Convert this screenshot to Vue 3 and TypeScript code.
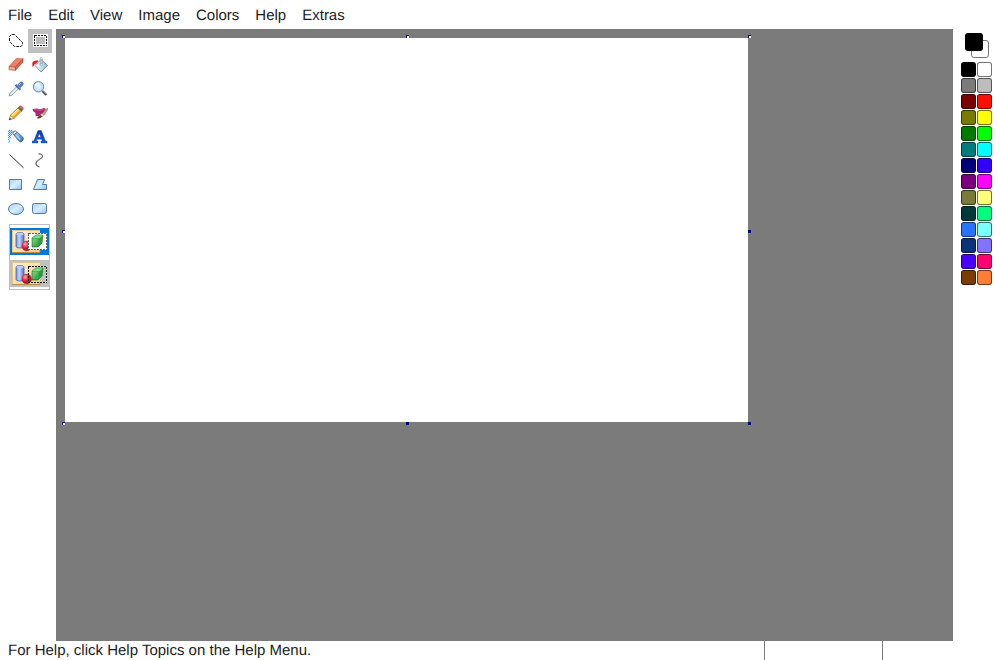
<script setup lang="ts">
import { ref } from 'vue'

const menus: string[] = ['File', 'Edit', 'View', 'Image', 'Colors', 'Help', 'Extras']
const tools: string[] = [
  'lasso', 'select', 'eraser', 'fill', 'picker', 'magnifier', 'pencil', 'brush',
  'airbrush', 'text', 'line', 'curve', 'rectangle', 'polygon', 'ellipse', 'rounded',
]
const colors: string[] = [
  '#000000', '#ffffff', '#7b7b7b', '#bdbdbd', '#7b0000', '#ff0f00', '#7b7b00', '#ffff00',
  '#007b00', '#00ff00', '#007b7b', '#00ffff', '#00007b', '#3300ff', '#7b007b', '#ff00ff',
  '#7b7b39', '#ffff7b', '#003939', '#00ff7b', '#2873ff', '#7bffff', '#0a3379', '#8473ff',
  '#4a00ff', '#ff0073', '#7b3c00', '#ff7d34',
]
const handles: string[] = ['nw open', 'n open', 'ne open', 'w open', 'e', 'sw open', 's', 'se']
const activeTool = ref('select')
const transparent = ref(false)
</script>

<template>
  <div class="paint">
    <nav class="menu">
      <button v-for="m in menus" :key="m">{{ m }}</button>
    </nav>
    <main class="middle">
      <aside class="toolbox">
        <div class="tools">
          <button v-for="t in tools" :key="t" class="tool" :class="{ active: activeTool === t }" @click="activeTool = t">
            <svg width="16" height="16" viewBox="0 0 16 16" fill="none">
              <g v-if="t === 'lasso'" stroke="#111">
                <path d="M1.5 8V3.5L3.5 1.5H6.5L14.5 9.5V12L13 13.5H6.5L1.5 8.5" stroke-dasharray="3 1" />
              </g>
              <g v-else-if="t === 'select'">
                <path d="M1 1h15v13H1z" fill="#fff" />
                <path d="M4 4h9v7H4z" fill="#bdbdbd" />
                <path d="M2.5 2.5h12v10h-12z" stroke="#111" stroke-dasharray="2 1" shape-rendering="crispEdges" />
              </g>
              <g v-else-if="t === 'eraser'" stroke-linejoin="round">
                <path d="M8.5 1.3L15 1.7L7.5 10L1 9.5Z" fill="#ef8067" stroke="#cb6550" stroke-width=".6" />
                <path d="M1 9.5L7.5 10V13.3L1.2 12.7Z" fill="#f7ad94" stroke="#9d4a3d" stroke-width=".7" />
                <path d="M7.5 10L15 1.7V5L7.5 13.3Z" fill="#d9654e" stroke="#a8483a" stroke-width=".7" />
              </g>
              <g v-else-if="t === 'fill'">
                <path d="M9 2.5L15.5 8.5L9 15L3 8.5Z" fill="url(#metal)" stroke="#5b7f9c" stroke-width=".8" />
                <path d="M8.3 7.5V1.5C8.3 0 10.3 0 10.3 1.5V7" stroke="#9da5aa" stroke-width=".8" />
                <circle cx="9.3" cy="7.5" r="1" fill="#fff" stroke="#777" stroke-width=".5" />
                <path d="M6.5 3.8C3.5 2.8 1 4 .3 6L.5 10.5L2.5 7.5L5 5.8Z" fill="#d72523" />
              </g>
              <g v-else-if="t === 'picker'">
                <path d="M8.8 5.7L2 12L1.2 15L4 14L10.8 7.5" fill="#e0f0f6" stroke="#7296a7" stroke-width=".8" />
                <path d="M8 3.5L12.7 8L11.5 8.8L7.3 4.8Z" fill="#426ec0" stroke="#335a9f" stroke-width=".8" />
                <path d="M9.7 4L12 1.5C13 .5 14.7 1 15 2C15.4 3 15 4 14.3 4.7L12.2 6.5Z" fill="#5782ce" stroke="#4068ac" stroke-width=".8" />
                <path d="M11 4L13 2" stroke="#a9c9f1" />
              </g>
              <g v-else-if="t === 'magnifier'">
                <path d="M10.5 10L14.3 14" stroke="#555" stroke-width="2.4" />
                <path d="M11 9.7L14.3 13" stroke="#b9a89b" stroke-width=".8" />
                <circle cx="6.5" cy="5.8" r="5.2" fill="url(#glass)" stroke="#6b8fbd" stroke-width="1" />
                <path d="M3.4 5C4 3 5.5 2.2 7.5 2.5" stroke="#fff" stroke-width="1.3" />
              </g>
              <g v-else-if="t === 'pencil'">
                <path d="M1 15L2.5 10L6.2 13.5Z" fill="#f3ddb0" stroke="#9b733b" stroke-width=".6" />
                <path d="M2.5 10L10 3L13.5 6L6 13.5Z" fill="#ffd44d" stroke="#93702e" stroke-width=".8" />
                <path d="M5.2 12.8L12.5 5.5" stroke="#e9942d" stroke-width="1.2" />
                <path d="M3.5 10.4L10.2 4" stroke="#fff5a0" />
                <path d="M9.7 3L11.2 1.5L15 5L13.5 6.5Z" fill="#55715c" />
                <path d="M11.2 1.5Q12 .5 13 .8L15.2 2.5Q15.5 4 14.8 5Z" fill="#e96875" stroke="#a5424b" stroke-width=".5" />
                <path d="M1 15L1.8 12.7L3.3 14.2Z" fill="#222" />
              </g>
              <g v-else-if="t === 'brush'">
                <path d="M.3 4L5 3.5L8 4.2L12 3L14 4L11 8L7 11H3.5V8L1.5 6.5Z" fill="#aa2871" />
                <path d="M2 4.7H5.5L8 5.5L11.5 4.3" stroke="#cf5794" />
                <path d="M10 8.7L15.2 3.2L16 4L12 10.2Z" fill="#cfa26b" stroke="#765437" stroke-width=".5" />
                <path d="M8.5 9.8L10 8.5L12 10.2L10.3 12Z" fill="#f4eedf" stroke="#777" stroke-width=".5" />
                <path d="M4.5 13.2L8.3 9.7L10.2 11.7Q8 14.2 4.5 13.2Z" fill="#603b21" />
              </g>
              <g v-else-if="t === 'airbrush'">
                <path d="M0 1H5V4L3 8L2 14H0Z" fill="#d4f2fd" />
                <path d="M0 2h1v1H0zM2 2h1v1H2zM4 2h1v1H4zM0 4h1v1H0zM2 4h1v1H2zM0 6h1v1H0zM2 6h1v1H2zM0 8h1v1H0zM2 8h1v1H2zM0 10h1v1H0zM1 12h1v1H1z" fill="#29b6f6" />
                <path d="M1 3h1v1H1zM3 3h1v1H3zM1 5h1v1H1zM3 5h1v1H3zM1 7h1v1H1zM1 1h1v1H1zM3 1h1v1H3z" fill="#3978dc" />
                <path d="M1 9h1v1H1zM1 11h1v1H1zM0 13h1v1H0z" fill="#75ddf9" />
                <path d="M5 3L7.5 1.7L9.3 3.5L6.5 6.3L4.8 4.7Z" fill="#ddd" stroke="#505050" stroke-width=".7" />
                <path d="M6 6L9.3 3.2L15.3 8.7Q16 11.5 12.5 13Q11 12.5 6 6Z" fill="url(#spray)" stroke="#345d86" stroke-width=".8" />
                <path d="M8 6L12.2 10.5" stroke="#a8d5fa" stroke-width="1.2" />
              </g>
              <g v-else-if="t === 'text'">
                <path d="M6 1.5H9.3L13.5 12H15V14H9V12H10.3L9.6 10.2H5L4.3 12H6V14H0V12H1.8ZM5.8 8.3H8.8L7.3 4.5Z" fill="url(#textBlue)" fill-rule="evenodd" stroke="#173c92" stroke-width=".4" />
              </g>
              <path v-else-if="t === 'line'" d="M1.5 1.5L15.5 14.8" stroke="#303030" />
              <path v-else-if="t === 'curve'" d="M6.5 .9Q10.5 .5 10.5 3.5C10.5 6 4 6.5 4 10.5Q4 13 7.5 14" stroke="#606060" stroke-width="1.1" />
              <path v-else-if="t === 'rectangle'" d="M1.5 2.5h12v10h-12z" fill="url(#blueFill)" stroke="#527aa4" />
              <path v-else-if="t === 'polygon'" d="M5.5 2.5H12.5L10.5 7.5H14.5V12.5H1.5Z" fill="url(#blueFill)" stroke="#527aa4" />
              <ellipse v-else-if="t === 'ellipse'" cx="8" cy="8" rx="7.5" ry="5.5" fill="url(#blueFill)" stroke="#527aa4" />
              <rect v-else x=".5" y="2.5" width="14" height="10" rx="2" fill="url(#blueFill)" stroke="#527aa4" />
            </svg>
          </button>
        </div>
        <div class="options">
          <button v-for="n in 2" :key="n" class="mode" :class="{ chosen: transparent === (n === 2) }" @click="transparent = n === 2">
            <svg width="39" height="27" viewBox="0 0 39 27" fill="none">
              <path d="M2 2h28v23H2z" fill="url(#paper)" />
              <path d="M2.5 24V2.5H30" stroke="#e2c58d" />
              <path d="M2 24.5H30V22" stroke="#b88d4a" />
              <g :transform="n === 2 ? 'translate(0 1)' : undefined">
                <path d="M6 6Q6 4.5 10 4.5T14 6V18.5Q14 20 10 20T6 18.5Z" fill="url(#cylinder)" stroke="#4964ac" stroke-width=".8" />
                <ellipse cx="10" cy="6" rx="3.7" ry="1.3" fill="#bdcff6" />
                <circle cx="16.7" cy="18" r="4.9" fill="url(#ball)" stroke="#b42b37" stroke-width=".5" />
                <path v-if="n === 1" d="M18 5h19v17H18z" fill="#fff" />
                <path v-if="n === 2" d="M30 5.5h6.5v16H30" stroke="#fff" />
                <path d="M18.5 5.5h18v16h-18z" :stroke="n === 1 ? '#5a6257' : '#111'" stroke-dasharray="2 1" shape-rendering="crispEdges" />
                <path d="M22 10L26 7H33L32 15L28 19H22Z" fill="#2b9d40" stroke="#137329" stroke-width=".6" />
                <path d="M22.3 10L26 7.3H32.8L29.5 10.2Z" fill="#83d98a" />
                <path d="M22.5 10.5H28.5V18H22.5Z" fill="url(#cube)" />
              </g>
            </svg>
          </button>
        </div>
      </aside>
      <section class="workspace">
        <div class="canvas">
          <i v-for="h in handles" :key="h" class="handle" :class="h"></i>
        </div>
      </section>
      <aside class="colorbox">
        <div class="current"><i class="background"></i><i class="foreground"></i></div>
        <div class="palette">
          <button v-for="c in colors" :key="c" :style="{ backgroundColor: c }"></button>
        </div>
      </aside>
    </main>
    <footer class="status">
      <span>For Help, click Help Topics on the Help Menu.</span><i class="position"></i><i class="size"></i>
    </footer>
    <svg class="definitions" width="0" height="0">
      <defs>
        <linearGradient id="blueFill" x2="1" y2="1"><stop stop-color="#a9d2fa" /><stop offset=".5" stop-color="#d8edff" /><stop offset="1" stop-color="#8fc2f1" /></linearGradient>
        <linearGradient id="metal"><stop stop-color="#ffffff" /><stop offset="1" stop-color="#8abde0" /></linearGradient>
        <radialGradient id="glass"><stop stop-color="#f2fbff" /><stop offset="1" stop-color="#b1d7f7" /></radialGradient>
        <linearGradient id="spray" x2="1" y2="1"><stop stop-color="#a9d9ff" /><stop offset="1" stop-color="#2d6caf" /></linearGradient>
        <linearGradient id="textBlue" x2="0" y2="1"><stop stop-color="#1236a5" /><stop offset="1" stop-color="#1261df" /></linearGradient>
        <linearGradient id="paper" x2="1" y2="1"><stop stop-color="#fff3d7" /><stop offset="1" stop-color="#f1ce7e" /></linearGradient>
        <linearGradient id="cylinder"><stop stop-color="#6688dc" /><stop offset=".4" stop-color="#c7d8ff" /><stop offset="1" stop-color="#4f6fc5" /></linearGradient>
        <radialGradient id="ball" cx=".35" cy=".3"><stop stop-color="#ffb0b2" /><stop offset=".5" stop-color="#e94554" /><stop offset="1" stop-color="#bc172b" /></radialGradient>
        <linearGradient id="cube" x2="1" y2="1"><stop stop-color="#83d582" /><stop offset="1" stop-color="#2b9c3b" /></linearGradient>
      </defs>
    </svg>
  </div>
</template>

<style>
html, body { overflow: hidden; }
</style>

<style scoped>
.paint { width: 1000px; height: 660px; display: flex; flex-direction: column; background: #fff; color: #1c1c1c; font: 15px "Liberation Sans", Arial, sans-serif; text-rendering: geometricPrecision; }
button { border: 0; margin: 0; padding: 0; color: inherit; background: none; font: inherit; text-rendering: inherit; }
i { display: block; box-sizing: border-box; }
.menu { height: 29px; display: flex; box-sizing: border-box; padding-top: 1px; }
.menu button { padding: 0 8px; line-height: 29px; height: 28px; }
.middle { height: 612px; display: flex; }
.toolbox { width: 56px; }
.tools { width: 48px; margin-left: 4px; display: grid; grid-template-columns: 24px 24px; grid-auto-rows: 24px; }
.tool { display: grid; place-items: center; }
.tool.active { background: #c0c0c0; }
svg { display: block; }
.options { width: 41px; height: 66px; margin: 3px 0 0 9px; border: 1px solid #c0c0c0; padding: 3px 0 2px; box-sizing: border-box; display: flex; flex-direction: column; gap: 5px; }
.mode { width: 39px; height: 27px; background: #c0c0c0; }
.mode.chosen { background: #0078d7; }
.workspace { width: 897px; padding: 9px; box-sizing: border-box; background: #7b7b7b; }
.canvas { position: relative; width: 683px; height: 384px; background: #fff; }
.handle { position: absolute; width: 3px; height: 3px; background: #00007b; }
.handle.open { background: #fff; border-top: 1px solid #00007b; border-left: 1px solid #00007b; }
.nw, .n, .ne { top: -3px; }
.w, .e { top: 192px; }
.sw, .s, .se { top: 384px; }
.nw, .w, .sw { left: -3px; }
.n, .s { left: 341px; }
.ne, .e, .se { left: 683px; }
.colorbox { width: 47px; }
.current { position: relative; height: 33px; }
.foreground, .background { position: absolute; width: 18px; height: 18px; border-radius: 3px; }
.foreground { left: 12px; top: 4px; background: #000; }
.background { left: 18px; top: 11px; background: #fff; border: 1px solid #777; }
.palette { margin-left: 8px; display: grid; grid-template-columns: 15px 15px; grid-auto-rows: 15px; gap: 1px; }
.palette button { border-radius: 3px; border: 1px solid rgba(0, 0, 0, .55); }
.status { height: 19px; display: flex; line-height: 20px; padding-left: 8px; }
.status span { width: 756px; }
.position, .size { width: 118px; height: 19px; border-left: 1px solid #7b7b7b; }
.definitions { position: absolute; }
</style>
